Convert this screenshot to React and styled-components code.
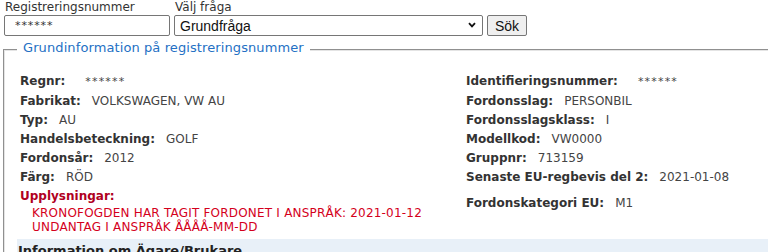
import React from "react";
import styled, { createGlobalStyle } from "styled-components";

const GlobalStyle = createGlobalStyle`
  html, body {
    margin: 0;
    padding: 0;
    background: #fff;
    overflow: hidden;
  }
  body {
    font-family: "DejaVu Sans", Verdana, sans-serif;
    font-size: 12px;
    color: #333;
  }
`;

const Page = styled.div`
  padding: 0 0 0 4px;
`;

const SearchForm = styled.form`
  display: flex;
  align-items: flex-end;
  gap: 4px;
  margin: 0;
`;

const Field = styled.div`
  display: flex;
  flex-direction: column;
`;

const FieldLabel = styled.label`
  font-size: 12px;
  line-height: 15px;
  color: #333;
  padding-left: 1px;
`;

const TextInput = styled.input`
  box-sizing: border-box;
  width: 166px;
  height: 21px;
  margin: 0;
  padding: 0 0 0 10px;
  border: 1px solid #767676;
  border-radius: 2px;
  font-family: "DejaVu Sans", sans-serif;
  font-size: 11px;
  letter-spacing: 0.9px;
  color: #333;
  background: #fff;
`;

const SelectWrap = styled.div`
  position: relative;
  width: 309px;
`;

const Select = styled.select`
  appearance: none;
  box-sizing: border-box;
  width: 100%;
  height: 21px;
  margin: 0;
  padding: 0 24px 0 5px;
  border: 1px solid #767676;
  border-radius: 2px;
  background: #fff;
  font-family: "Liberation Sans", Arial, sans-serif;
  font-size: 14px;
  color: #111;
`;

const Chevron = styled.svg`
  position: absolute;
  right: 7px;
  top: 7px;
  width: 8px;
  height: 6px;
  pointer-events: none;
`;

const Button = styled.button`
  box-sizing: border-box;
  width: 40px;
  height: 21px;
  margin: 0;
  padding: 0;
  border: 1px solid #767676;
  border-radius: 2px;
  background: #efefef;
  font-family: "Liberation Sans", Arial, sans-serif;
  font-size: 14px;
  color: #111;
`;

const Fieldset = styled.fieldset`
  margin: 4px -8px 0 -1px;
  padding: 13px 0 0 12px;
  border: 2px groove #e4e4e4;
  border-bottom: none;
  min-width: 0;
`;

const Legend = styled.legend`
  padding: 0 6px 3px;
  font-size: 13px;
  line-height: 16px;
  letter-spacing: 0.1px;
  color: #2470c4;
`;

const InfoGrid = styled.div`
  display: grid;
  grid-template-columns: 446px 1fr;
  padding-left: 3px;
`;

const Column = styled.div`
  display: flex;
  flex-direction: column;
`;

const Row = styled.div`
  line-height: 18.9px;
  white-space: nowrap;
  margin-top: ${(p) => (p.$spaced ? "7.4px" : "0")};
`;

const Key = styled.span`
  font-weight: bold;
  color: #333;
`;

const Val = styled.span`
  margin-left: ${(p) => (p.$masked ? "20px" : "11px")};
  color: #444;
  font-size: ${(p) => (p.$masked ? "11px" : "12px")};
  letter-spacing: ${(p) => (p.$masked ? "1.2px" : "0")};
`;

const Notice = styled.div`
  margin-top: 0.8px;
`;

const NoticeTitle = styled.div`
  font-weight: bold;
  color: #b0001e;
  line-height: 18.9px;
`;

const NoticeLine = styled.div`
  color: #d4001c;
  line-height: 14px;
  padding-left: 12px;
  letter-spacing: 0.2px;
  white-space: nowrap;
`;

const SectionBar = styled.div`
  margin-top: 5px;
  padding: 4px 1px 4px;
  background: #e8f0f8;
  font-size: 13px;
  line-height: 16px;
  font-weight: bold;
  color: #222;
  white-space: nowrap;
`;

const leftRows = [
  ["Regnr:", "******", true],
  ["Fabrikat:", "VOLKSWAGEN, VW AU"],
  ["Typ:", "AU"],
  ["Handelsbeteckning:", "GOLF"],
  ["Fordonsår:", "2012"],
  ["Färg:", "RÖD"],
];

const rightRows = [
  ["Identifieringsnummer:", "******", true],
  ["Fordonsslag:", "PERSONBIL"],
  ["Fordonsslagsklass:", "I"],
  ["Modellkod:", "VW0000"],
  ["Gruppnr:", "713159"],
  ["Senaste EU-regbevis del 2:", "2021-01-08"],
];

export default function App() {
  return (
    <Page>
      <GlobalStyle />
      <SearchForm onSubmit={(e) => e.preventDefault()}>
        <Field>
          <FieldLabel htmlFor="regnr">Registreringsnummer</FieldLabel>
          <TextInput id="regnr" defaultValue="******" />
        </Field>
        <Field>
          <FieldLabel htmlFor="fraga">Välj fråga</FieldLabel>
          <SelectWrap>
            <Select id="fraga" defaultValue="grund">
              <option value="grund">Grundfråga</option>
            </Select>
            <Chevron viewBox="0 0 8 6">
              <path d="M1 1.2 L4 4.4 L7 1.2" fill="none" stroke="#111" strokeWidth="1.8" />
            </Chevron>
          </SelectWrap>
        </Field>
        <Button type="submit">Sök</Button>
      </SearchForm>

      <Fieldset>
        <Legend>Grundinformation på registreringsnummer</Legend>
        <InfoGrid>
          <Column>
            {leftRows.map(([k, v, masked]) => (
              <Row key={k}>
                <Key>{k}</Key>
                <Val $masked={masked}>{v}</Val>
              </Row>
            ))}
            <Notice>
              <NoticeTitle>Upplysningar:</NoticeTitle>
              <NoticeLine>KRONOFOGDEN HAR TAGIT FORDONET I ANSPRÅK: 2021-01-12</NoticeLine>
              <NoticeLine>UNDANTAG I ANSPRÅK ÅÅÅÅ-MM-DD</NoticeLine>
            </Notice>
          </Column>
          <Column>
            {rightRows.map(([k, v, masked]) => (
              <Row key={k}>
                <Key>{k}</Key>
                <Val $masked={masked}>{v}</Val>
              </Row>
            ))}
            <Row $spaced>
              <Key>Fordonskategori EU:</Key>
              <Val>M1</Val>
            </Row>
          </Column>
        </InfoGrid>
        <SectionBar>Information om Ägare/Brukare</SectionBar>
      </Fieldset>
    </Page>
  );
}
